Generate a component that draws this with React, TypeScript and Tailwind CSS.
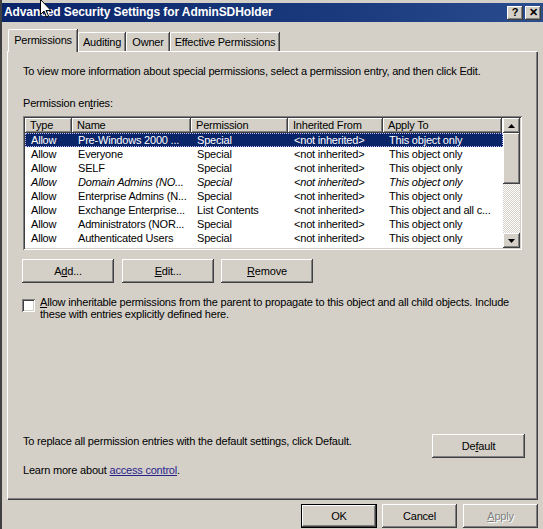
import React from 'react';

const raised =
  'bg-[#d4d0c8] shadow-[inset_-1px_-1px_0_#404040,inset_1px_1px_0_#ffffff,inset_-2px_-2px_0_#808080,inset_2px_2px_0_#d4d0c8]';

const rows = [
  ['Allow', 'Pre-Windows 2000 ...', 'Special', '<not inherited>', 'This object only'],
  ['Allow', 'Everyone', 'Special', '<not inherited>', 'This object only'],
  ['Allow', 'SELF', 'Special', '<not inherited>', 'This object only'],
  ['Allow', 'Domain Admins (NO...', 'Special', '<not inherited>', 'This object only'],
  ['Allow', 'Enterprise Admins (N...', 'Special', '<not inherited>', 'This object only'],
  ['Allow', 'Exchange Enterprise...', 'List Contents', '<not inherited>', 'This object and all c...'],
  ['Allow', 'Administrators (NOR...', 'Special', '<not inherited>', 'This object only'],
  ['Allow', 'Authenticated Users', 'Special', '<not inherited>', 'This object only'],
  ['Allow', 'SYSTEM', 'Full Control', '<not inherited>', 'This object only'],
];

const cols = [
  { label: 'Type', w: 'w-[47px]' },
  { label: 'Name', w: 'w-[119px]' },
  { label: 'Permission', w: 'w-[97px]' },
  { label: 'Inherited From', w: 'w-[95px]' },
  { label: 'Apply To', w: 'w-[119px]' },
];

function Btn({ children, className = '' }: { children: React.ReactNode; className?: string }) {
  return (
    <div className={`${raised} h-[24px] flex items-center justify-center ${className}`}>{children}</div>
  );
}

function Arrow({ down }: { down?: boolean }) {
  return (
    <div className={`${raised} w-[17px] h-[15px] flex items-center justify-center`}>
      <svg width="7" height="4" viewBox="0 0 7 4">
        {down ? <path d="M0 0h7L3.5 4z" fill="#000" /> : <path d="M0 4h7L3.5 0z" fill="#000" />}
      </svg>
    </div>
  );
}

export default function App() {
  return (
    <div className="relative w-[543px] h-[529px] overflow-hidden bg-[#d4d0c8] border-l-2 border-l-[#404040] pt-[3px] font-['Liberation_Sans',Arial,sans-serif] text-[11px] leading-[13px] tracking-[-0.2px] text-black">
      {/* title bar */}
      <div className="h-[19px] flex items-center justify-between pl-[2px] pr-[2px] bg-[linear-gradient(90deg,#0a246a,#1d3d80_70%,#2a4d8f)]">
        <span className="text-white font-bold text-[12px] tracking-[-0.1px]">Advanced Security Settings for AdminSDHolder</span>
        <div className="flex gap-[2px] tracking-normal">
          <div className={`${raised} w-[16px] h-[14px] flex items-center justify-center font-bold text-[11px]`}>?</div>
          <div className={`${raised} w-[16px] h-[14px] flex items-center justify-center font-bold text-[11px]`}>✕</div>
        </div>
      </div>

      {/* tabs */}
      <div className="relative z-10 flex items-end ml-[6px] mt-[7px] h-[22px]">
        <div className="-mb-[1px] h-[23px] w-[69px] bg-[#d4d0c8] border-t border-l border-white rounded-tl-[2px] shadow-[inset_-1px_0_0_#808080,1px_0_0_#404040] flex items-center justify-center pb-[2px]">
          Permissions
        </div>
        {[
          ['Auditing', 'w-[47px]'],
          ['Owner', 'w-[43px]'],
          ['Effective Permissions', 'w-[109px]'],
        ].map(([t, w]) => (
          <div
            key={t}
            className={`${w} h-[19px] ml-[1px] border-t border-l border-white rounded-tl-[2px] shadow-[inset_-1px_0_0_#808080,1px_0_0_#404040] flex items-center justify-center`}
          >
            {t}
          </div>
        ))}
      </div>

      {/* tab page */}
      <div className="ml-[5px] w-[530px] h-[448px] border-t border-l border-white shadow-[inset_-1px_-1px_0_#808080,1px_1px_0_#404040] flex flex-col pl-[15px] pr-[12px] pb-[22px]">
        <div className="mt-[13px]">To view more information about special permissions, select a permission entry, and then click Edit.</div>
        <div className="mt-[19px]">
          Permission en<span className="underline">t</span>ries:
        </div>

        {/* list */}
        <div className="mt-[6px] w-[499px] h-[134px] p-[2px] bg-white shadow-[inset_1px_1px_0_#808080,inset_-1px_-1px_0_#ffffff,inset_2px_2px_0_#404040,inset_-2px_-2px_0_#d4d0c8] flex overflow-hidden">
          <div className="flex-1 flex flex-col overflow-hidden">
            <div className="flex h-[15px] shrink-0">
              {cols.map((c) => (
                <div
                  key={c.label}
                  className={`${c.w} ${raised} shrink-0 pl-[5px] flex items-center`}
                >
                  {c.label}
                </div>
              ))}
            </div>
            {rows.map((r, i) => (
              <div
                key={i}
                className={`flex h-[14px] shrink-0 items-center ${
                  i === 0
                    ? 'bg-[#0a246a] text-white outline-1 outline-dotted -outline-offset-1 outline-[#c0c0ff]'
                    : ''
                } ${i === 3 ? 'italic' : ''}`}
              >
                {r.map((cell, j) => (
                  <div key={j} className={`${cols[j].w} shrink-0 pl-[6px] whitespace-nowrap overflow-hidden`}>
                    {cell}
                  </div>
                ))}
              </div>
            ))}
          </div>
          {/* scrollbar */}
          <div className="w-[17px] flex flex-col shrink-0">
            <Arrow />
            <div className={`${raised} h-[51px]`} />
            <div className="flex-1 bg-[repeating-conic-gradient(#ffffff_0_25%,#d4d0c8_0_50%)] bg-[length:2px_2px]" />
            <Arrow down />
          </div>
        </div>

        {/* buttons */}
        <div className="mt-[9px] flex -ml-[1px]">
          <Btn className="w-[92px]">
            A<span className="underline">d</span>d...
          </Btn>
          <Btn className="w-[92px] ml-[8px]">
            <span className="underline">E</span>dit...
          </Btn>
          <Btn className="w-[92px] ml-[7px]">
            <span className="underline">R</span>emove
          </Btn>
        </div>

        {/* checkbox */}
        <div className="mt-[13px] flex items-start">
          <div className="mt-[3px] -ml-[1px] w-[13px] h-[13px] shrink-0 bg-white shadow-[inset_1px_1px_0_#808080,inset_-1px_-1px_0_#ffffff,inset_2px_2px_0_#404040,inset_-2px_-2px_0_#d4d0c8]" />
          <div className="ml-[5px] leading-[12px] whitespace-nowrap">
            <span className="underline">A</span>llow inheritable permissions from the parent to propagate to this object and all child objects. Include
            <br />
            these with entries explicitly defined here.
          </div>
        </div>

        {/* bottom of page */}
        <div className="mt-auto flex items-start justify-between">
          <div className="pt-[1px]">To replace all permission entries with the default settings, click Default.</div>
          <Btn className="w-[93px]">
            De<span className="underline">f</span>ault
          </Btn>
        </div>
        <div className="mt-[6px]">
          Learn more about <span className="underline text-[#28238a]">access control</span>.
        </div>
      </div>

      {/* dialog buttons */}
      <div className="mt-[5px] ml-[299px] flex">
        <div className="w-[76px] h-[24px] border border-black">
          <div className={`${raised} h-full flex items-center justify-center`}>OK</div>
        </div>
        <Btn className="w-[75px] ml-[5px]">Cancel</Btn>
        <Btn className="w-[75px] ml-[6px] text-[#808080] [text-shadow:1px_1px_0_#ffffff]">
          <span className="underline">A</span>pply
        </Btn>
      </div>

      {/* mouse pointer */}
      <svg className="absolute left-[38px] top-[-1px]" width="12" height="19" viewBox="0 0 12 19">
        <path d="M0.5 0.5v15l3.5-3.5 2.5 6 2-1-2.5-5.5h5z" fill="#fff" stroke="#000" strokeWidth="1" />
      </svg>
    </div>
  );
}
